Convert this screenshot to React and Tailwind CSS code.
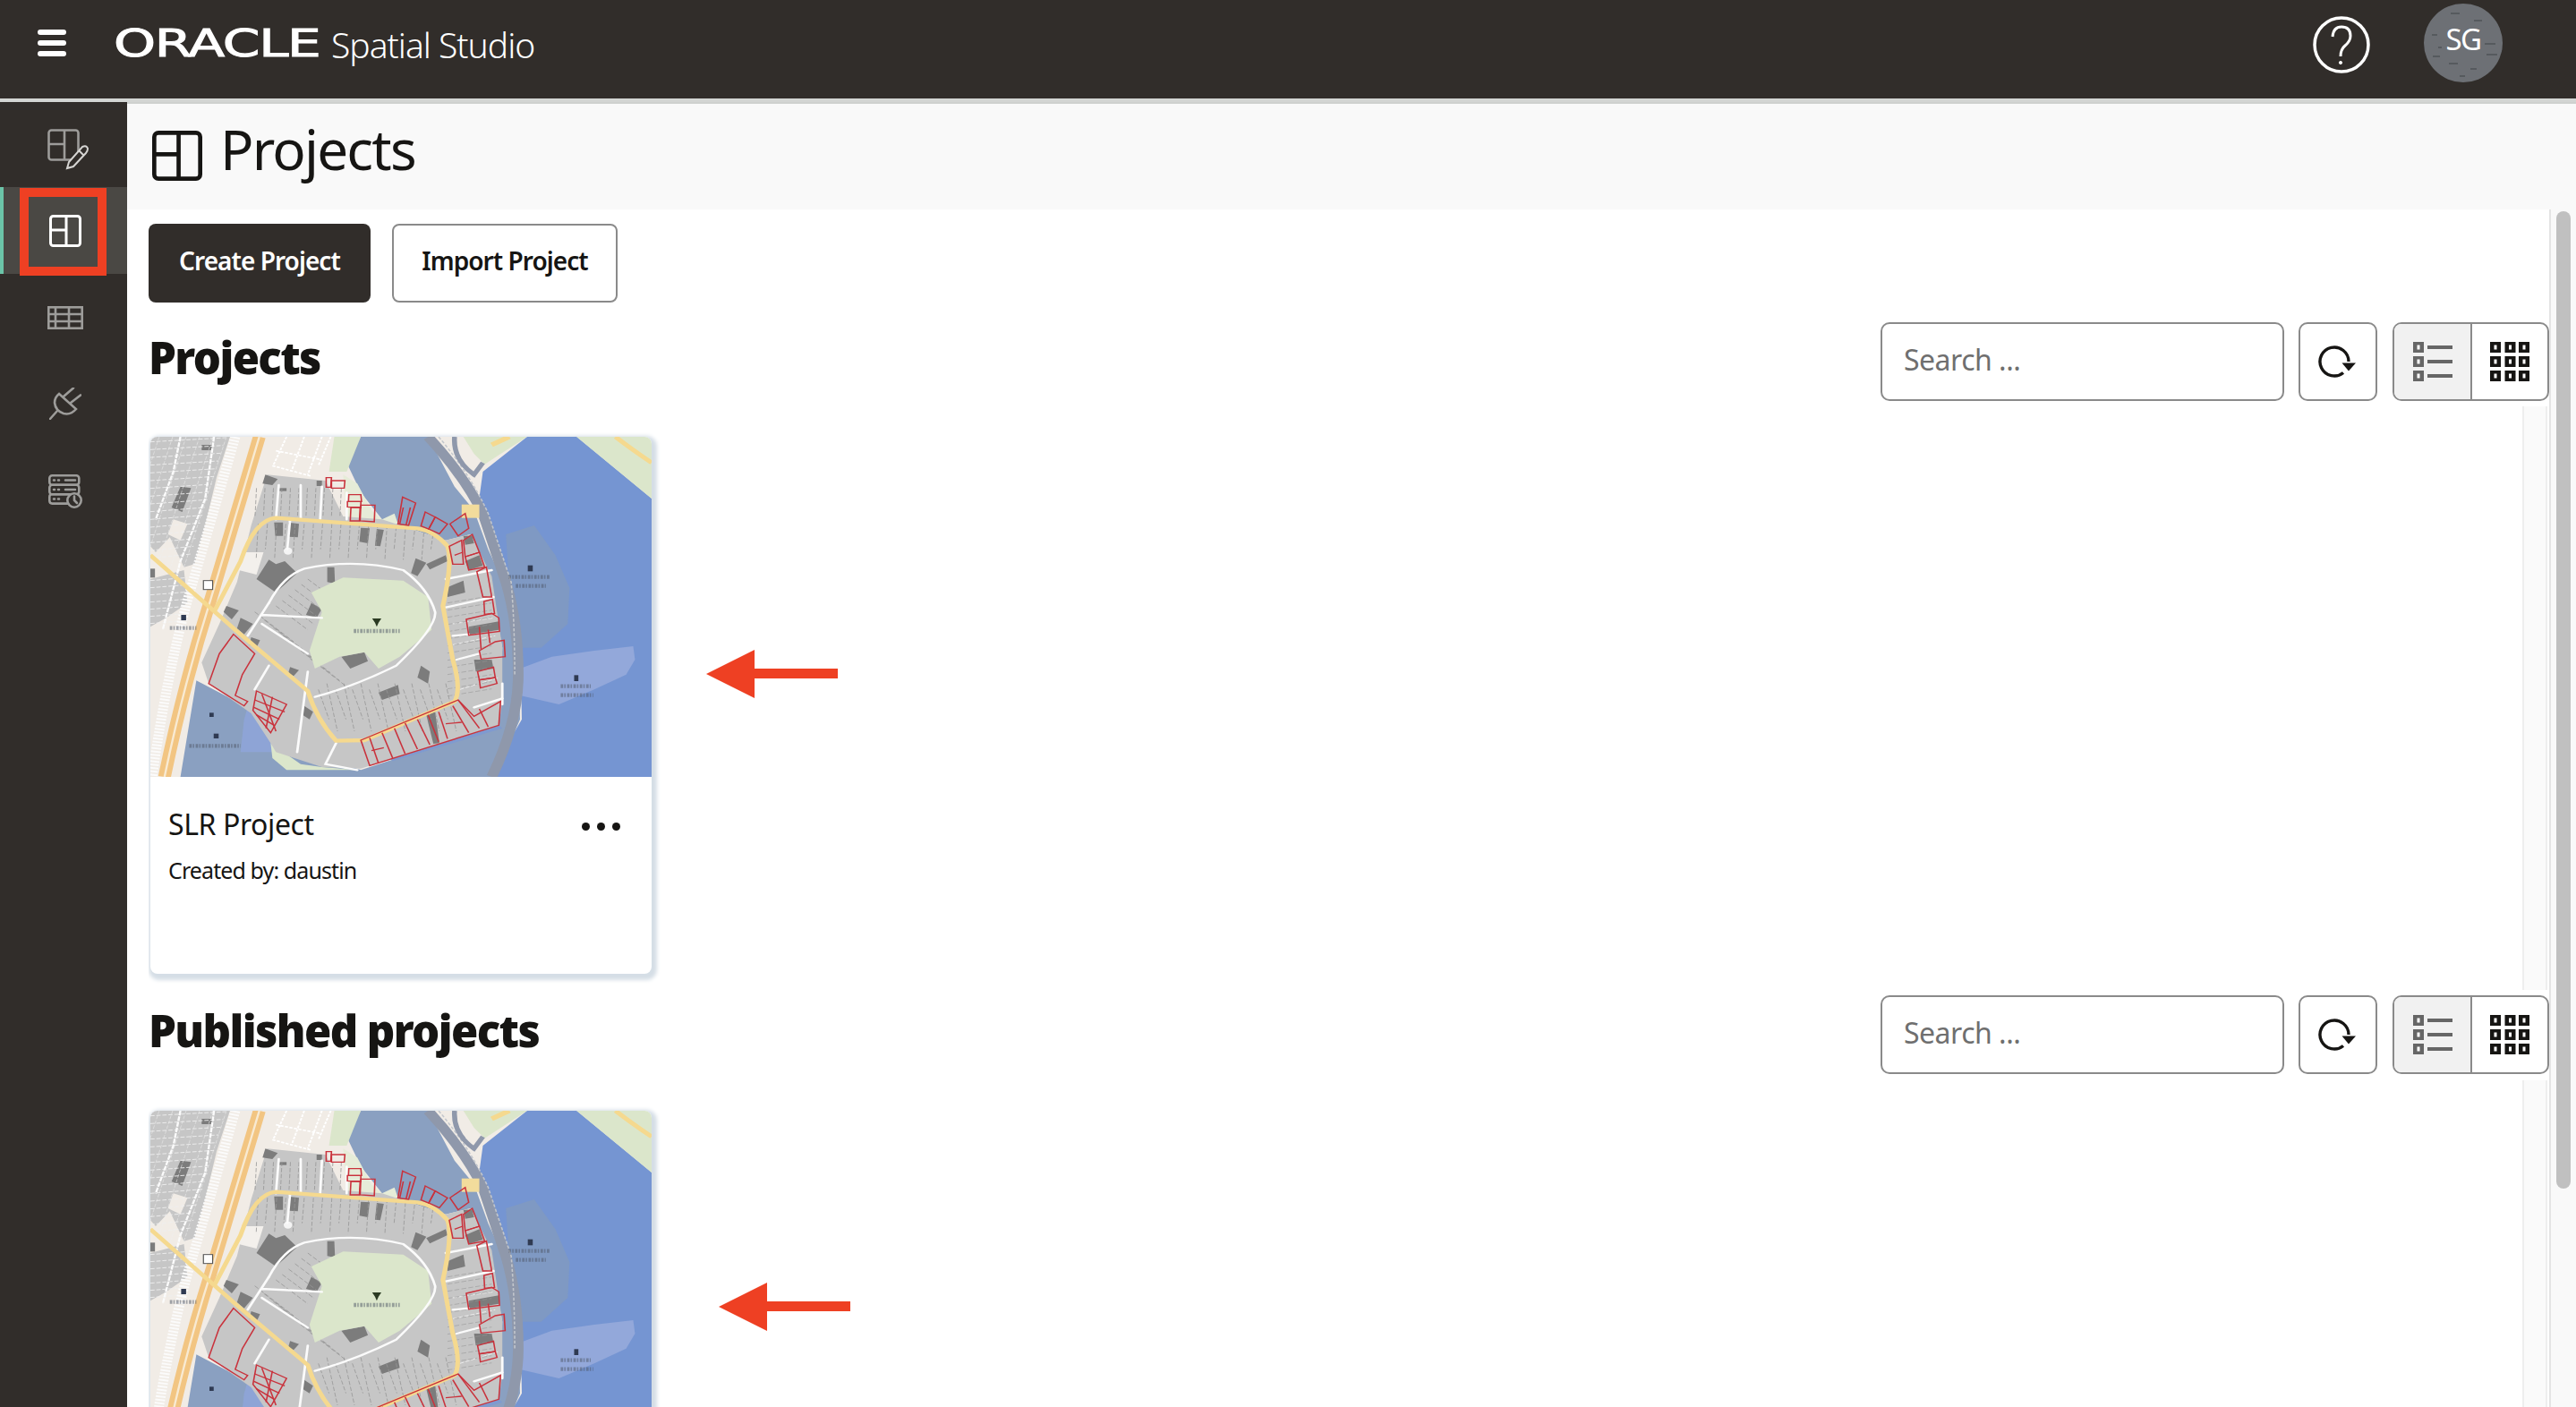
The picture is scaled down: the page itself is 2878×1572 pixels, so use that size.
import React from 'react';

const RED = '#c9323c';

// Map thumbnail, drawn in a 1417x1140 working grid and stretched to the card
const redLots = [
    '542,190 557,190 555,222 542,222',
    '557,200 595,200 593,225 557,225',
    '606,247 640,247 642,270 605,270',
    '602,270 640,270 640,290 602,288',
    '612,290 638,290 636,335 610,335',
    '640,282 680,282 678,338 638,335',
    '758,255 795,275 775,350 745,345',
    '822,305 850,322 832,362 810,352',
    '850,322 885,345 862,378 832,362',
    '935,310 945,360 915,385 892,345',
    '890,420 925,400 930,480 900,480',
    '930,400 955,380 975,440 935,455',
    '935,455 975,440 990,490 945,500',
    '968,505 995,490 1010,590 985,590',
    '988,605 1012,598 1018,645 990,648',
    '938,665 1010,645 1030,660 1032,705 945,718',
    '975,770 1020,740 1045,735 1048,790 980,798',
    '970,840 1015,825 1020,860 975,868',
    '975,868 1020,860 1025,880 978,895',
    '640,1070 915,935 960,990 1035,940 1030,1020 665,1155',
    '280,715 340,780 305,850 285,920 320,940 310,955 210,880 240,780',
    '345,905 430,950 385,1045 335,970',
];

const redLines = [
    'M665,1062 L690,1148', 'M700,1045 L730,1130', 'M735,1030 L765,1115', 'M765,1012 L800,1100',
    'M800,1000 L835,1085', 'M830,985 L860,1075', 'M860,975 L885,1065', 'M900,955 L945,1045',
    'M915,935 L975,1030', 'M975,965 L1000,1025', 'M880,1015 L925,1010', 'M670,1105 L705,1095',
    'M360,915 L400,1040', 'M390,925 L372,1030', 'M340,935 L425,975', 'M338,960 L410,1000', 'M345,985 L395,1020',
    'M760,290 L750,345', 'M780,290 L768,348', 'M905,450 L928,440', 'M975,690 L980,765', 'M1000,700 L1005,745',
];

const darkBlocks = [
    '130,220 160,225 135,305 105,290',
    '190,80 220,80 218,98 190,98',
    '370,180 405,195 390,215 362,210',
    '395,340 420,340 420,385 398,385',
    '435,340 465,345 462,390 438,388',
    '640,358 665,360 660,410 636,405',
    '685,362 705,365 695,420 680,418',
    '380,465 400,480 425,470 460,510 400,575 345,530',
    '545,490 565,490 567,545 545,540',
    '795,460 825,475 800,520 782,510',
    '825,480 880,450 885,470 835,498',
    '880,560 930,535 935,575 885,590',
    '260,620 295,635 275,665 252,640',
    '300,660 335,680 310,715 290,695',
    '330,725 355,735 345,760 325,750',
    '500,610 530,630 515,660 485,650',
    '585,790 650,775 660,805 610,830',
    '440,825 465,835 450,855 435,845',
    '690,910 745,885 750,915 700,935',
    '810,820 835,840 830,880 800,860',
    '480,955 505,975 495,1000 475,985',
    '945,690 1030,672 1030,700 945,716',
    '935,470 975,450 985,485 945,500',
    '960,800 1010,800 1015,830 965,840',
    '825,985 850,975 862,1080 845,1082',
    '45,495 58,495 58,525 45,525',
    '930,385 955,385 960,410 935,415',
    '405,225 430,225 430,235 405,235',
    '515,200 530,200 530,218 515,218',
];

const steps = (from, to, step) => Array.from({ length: Math.floor((to - from) / step) + 1 }, (_, i) => from + i * step);

// Parcel grids: pale dashes on the west side, darker ticks inside the ring road
const nwRows = steps(70, 480, 26).map(y => `M45,${y} L${Math.round(262 - (y - 53) * 0.25)},${y - 14}`).join(' ');
const nwCols = steps(70, 260, 38).map(x => `M${x},53 L${x - 120},490`).join(' ');
const swRows = steps(535, 680, 24).map(y => `M45,${y} L150,${y - 10}`).join(' ');
const ringTicks = steps(350, 860, 26).map((x, i) => `M${x},${345 + (x > 700 ? (x - 700) / 4 : 0)} L${x - 6},${i % 2 ? 430 : 465}`).join(' ');
const northTicks = steps(345, 590, 24).map(x => `M${x},225 L${x - 4},318`).join(' ');
const midTicks = steps(520, 900, 24).map((x, i) => `M${x},${i % 2 ? 880 : 900} L${x + 30},${i % 2 ? 1040 : 1000}`).join(' ');
const eastTicks = steps(610, 940, 24).map(y => `M885,${y} L1010,${y - 24}`).join(' ');
const westTicks = steps(680, 860, 26).map(x => `M${x - 340},${x - 40} L${x - 230},${x + 60}`).join(' ');
const innerTicks = steps(400, 500, 18).map(x => `M${x},${1020 - x} L${x + 90},${1100 - x}`).join(' ');

const MapLabel = ({ d }) => <path d={d} stroke="#4d5666" strokeWidth="13" strokeDasharray="7 3 4 4" opacity="0.5" fill="none" />;

const MapThumb = () => (
    <svg viewBox="45 53 1417 1140" preserveAspectRatio="none" className="block h-[380px] w-full blur-[0.6px]">
        <rect x="45" y="53" width="1417" height="1140" fill="#f1ece6" />

        {/* water */}
        <polygon points="1110,53 1250,53 1462,260 1462,1193 1000,1193 1095,1000 1090,700 1040,500 970,300 985,170" fill="#7595d2" />
        <polygon points="640,53 830,53 905,220 960,300 1000,430 1050,560 1085,760 1090,1000 1020,1193 130,1193 175,870 320,960 395,1070 640,1170 1030,1020 1040,760 1000,500 950,380 880,400 700,330 640,240 600,140" fill="#8aa0c1" />
        <polygon points="1050,380 1130,350 1190,450 1230,560 1225,680 1150,760 1090,760 1060,560" fill="#7f99c3" />
        <polygon points="1090,830 1180,790 1300,770 1410,755 1415,800 1390,850 1300,900 1200,950 1090,920" fill="#93a8da" />
        <polygon points="320,960 395,1070 400,1110 300,1110 310,1000" fill="#8ea4d6" />
        <polygon points="720,1130 1020,1010 1040,1030 730,1140" fill="#7f9ad0" />

        {/* parks and green edges */}
        <polygon points="1250,53 1462,53 1462,260" fill="#dbe6cb" />
        <polygon points="930,53 1110,53 990,145 960,110" fill="#dbe6cb" />
        <polygon points="565,53 640,53 600,170 550,170" fill="#dbe6cb" />
        <polygon points="385,1080 470,1150 530,1160 630,1170 430,1170 390,1130" fill="#dbe6cb" />
        <polygon points="590,180 630,210 670,300 700,330 735,310 745,345 600,335" fill="#e6ecd8" />
        <path d="M1360,53 Q1400,90 1462,140" stroke="#f5d98f" strokeWidth="14" fill="none" />
        <path d="M1010,80 L1060,53" stroke="#f5d98f" strokeWidth="16" fill="none" />

        {/* highway on the east shore */}
        <path d="M830,53 Q930,180 985,310 L1050,540 Q1085,680 1085,850 Q1085,1010 1010,1193" stroke="#8f98ab" strokeWidth="30" fill="none" />
        <path d="M860,53 Q950,180 1000,310 L1065,540 Q1075,680 1075,850" stroke="#c2c6cc" strokeWidth="4" strokeDasharray="10 6" fill="none" />
        <path d="M905,53 Q900,130 960,180 L985,140" stroke="#8f98ab" strokeWidth="14" fill="none" />
        <rect x="925" y="280" width="50" height="45" fill="#f2dc9c" />

        {/* dashed streets in the pale block north of the ring */}
        <path d="M390,150 L500,185 M400,100 L530,130 M430,53 L392,150 M480,53 L445,165 M530,53 L490,180 M555,53 L520,150" stroke="#ffffff" strokeWidth="5" strokeDasharray="9 4" fill="none" />

        {/* neighbourhood blocks */}
        <polygon points="45,53 270,53 232,190 200,350 170,480 140,490 100,390 60,440 45,420" fill="#c6c6c6" />
        <polygon points="45,530 140,500 150,610 90,660 45,690" fill="#c6c6c6" />
        <polygon points="375,180 540,200 590,320 700,330 880,400 950,380 1010,520 1040,760 1040,940 1030,1020 640,1165 530,1160 400,1110 385,1080 330,980 210,880 190,810 240,680 290,540 330,350" fill="#c6c6c6" />
        <polygon points="110,330 150,345 130,400 95,380" fill="#f1ece6" />
        <polygon points="300,440 365,440 345,515 295,500" fill="#f3f0ec" />
        {darkBlocks.map((points, i) => <polygon key={i} points={points} fill="#7c7c7c" />)}

        {/* lot lines */}
        <g stroke="#efefef" strokeWidth="2.5" strokeDasharray="12 5" fill="none">
            <path d={nwRows} />
            <path d={swRows} />
            <path d={nwCols} opacity="0.6" />
            <path d="M900,620 L1010,590 M900,680 L1015,660 M900,750 L1020,720 M920,900 L1030,860" />
        </g>
        <g stroke="#969696" strokeWidth="2.2" strokeDasharray="14 6" fill="none">
            <path d={ringTicks} />
            <path d={northTicks} />
            <path d={midTicks} />
            <path d={eastTicks} opacity="0.7" />
            <path d={westTicks} />
            <path d={innerTicks} />
        </g>

        {/* central park, on top of the parcel ticks */}
        <polygon points="500,575 590,525 760,535 830,590 840,700 750,790 690,830 650,775 580,790 510,830 495,770 530,640" fill="#dbe6cb" />
        <circle cx="434" cy="436" r="12" fill="#f4f4f4" />

        {/* light streets */}
        <g stroke="#fbfbfb" strokeWidth="7" fill="none" strokeLinecap="round">
            <path d="M380,610 Q420,520 480,495 Q620,460 760,500 Q830,560 850,640 Q855,690 740,820 Q620,890 510,925" />
            <path d="M380,610 L320,720 M360,650 L530,660 M360,680 L490,780 M440,330 L432,430 M408,215 L400,330 M470,215 L470,330 M530,220 L525,330 M600,240 L600,330" />
            <path d="M880,530 L1010,500 M880,625 L1015,590 M900,720 L945,715 M910,800 L975,780 M960,960 L1040,930" />
            <path d="M490,840 L460,1110 M380,820 L340,900 M570,1080 L540,1150 L630,1170" />
            <path d="M1040,880 L1040,950" />
        </g>
        <path d="M225,53 L200,260 L130,470 L80,700 M130,53 L110,170 L60,330" stroke="#fbfbfb" strokeWidth="6" strokeDasharray="16 3" fill="none" />

        {/* interstate */}
        <path d="M285,53 Q230,280 150,600 Q90,860 50,1193" stroke="#fbfbfb" strokeWidth="28" strokeDasharray="6 5" fill="none" />
        <path d="M353,53 Q300,260 215,600 Q140,880 85,1193" stroke="#f2c582" strokeWidth="36" fill="none" />
        <path d="M353,53 Q300,260 215,600 Q140,880 85,1193" stroke="#f8ead2" strokeWidth="6" fill="none" />

        {/* ring road */}
        <path d="M45,450 L285,700 L490,905 Q515,1000 570,1072 L650,1070 L905,940 Q925,900 900,800 L872,620 Q900,470 885,420 Q850,370 800,360 L400,325 Q340,330 300,470 L225,640" stroke="#f5d98f" strokeWidth="13" fill="none" />

        {/* highlighted parcels */}
        <g stroke={RED} strokeWidth="4" fill="none">
            {redLots.map((points, i) => <polygon key={i} points={points} />)}
            {redLines.map((d, i) => <path key={i} d={d} />)}
        </g>

        {/* map labels, too small to read */}
        <MapLabel d="M620,704 H750" />
        <MapLabel d="M100,694 H175" />
        <MapLabel d="M1058,523 H1173" />
        <MapLabel d="M1078,553 H1163" />
        <MapLabel d="M1205,889 H1290" />
        <MapLabel d="M1205,919 H1297" />
        <MapLabel d="M155,1089 H300" />
        <g fill="#2f3a52">
            <polygon points="672,662 698,662 690,676 685,690 680,676" fill="#2b3a22" />
            <rect x="132" y="650" width="14" height="18" />
            <rect x="1112" y="484" width="14" height="20" />
            <rect x="1243" y="852" width="12" height="20" />
            <rect x="212" y="978" width="12" height="14" />
            <rect x="224" y="1048" width="14" height="16" />
        </g>
        <rect x="195" y="535" width="26" height="30" fill="#ffffff" stroke="#555555" strokeWidth="3" />
    </svg>
);

// Layout glyph used by the page title and the side navigation
const LayoutIcon = ({ className, stroke, width = 3 }) => (
    <svg viewBox="0 0 36 36" className={className} fill="none" stroke={stroke} strokeWidth={width}>
        <rect x="1.5" y="1.5" width="33" height="33" rx="3" />
        <path d="M19 1.5 V34.5 M1.5 17 H19" />
    </svg>
);

const EditProjectIcon = () => (
    <svg viewBox="0 0 46 46" className="h-[46px] w-[46px]" fill="none" strokeWidth="2.6">
        <rect x="1.5" y="1.5" width="33" height="33" rx="3" stroke="#9d9c9a" />
        <path d="M19 1.5 V34.5 M1.5 17 H19" stroke="#9d9c9a" />
        <path d="M39 20 Q44 18 45 22 Q45 25 43 27 L29 42 L22 44 L24 37 Z M35 24 L41 30" stroke="#d6d5d3" fill="#312d2a" strokeWidth="2" />
    </svg>
);

const TableIcon = () => (
    <svg viewBox="0 0 40 26" className="h-[26px] w-[40px]" fill="none" stroke="#9d9c9a" strokeWidth="2.6">
        <rect x="1.3" y="1.3" width="37.4" height="23.4" />
        <path d="M1.3 9 H38.7 M1.3 17 H38.7 M9 1.3 V24.7 M24 1.3 V24.7" />
    </svg>
);

const PlugIcon = () => (
    <svg viewBox="0 0 36 36" className="h-[36px] w-[36px]" fill="none" stroke="#9d9c9a" strokeWidth="2.6" strokeLinecap="round">
        <path d="M11 7 L30 24 Q24 31 16 29 Q7 26 6 17 Q6 11 11 7 Z" fill="#312d2a" />
        <path d="M16 10 L27 0.5 M24 17 L35 8.5 M9 26 L1 35" />
    </svg>
);

const ScheduleIcon = () => (
    <svg viewBox="0 0 38 38" className="h-[38px] w-[38px]" fill="none" stroke="#9d9c9a" strokeWidth="2.6" strokeLinecap="round">
        <rect x="1.3" y="1.3" width="33" height="10.5" rx="3" />
        <rect x="1.3" y="11.8" width="33" height="10.5" rx="3" />
        <path d="M23 32.6 H4.3 Q1.3 32.6 1.3 29.6 V25 Q1.3 22.3 4.3 22.3 H22" />
        <path d="M6 6.5 H7 M11 6.5 H12 M19 6.5 H30 M6 17 H7 M11 17 H12 M19 17 H30 M6 27.5 H7 M11 27.5 H12" />
        <circle cx="29" cy="29" r="7.7" fill="#312d2a" />
        <path d="M29 24.5 V29 L32 32" />
    </svg>
);

const SideItem = ({ active, children, height = 'h-[97px]' }) => (
    <div className={`flex items-center justify-center border-l-4 ${height} ${active ? 'border-[#6bc4a8] bg-[#4a4844]' : 'border-transparent'}`}>
        {children}
    </div>
);

const Sidebar = () => (
    <aside className="flex w-[142px] shrink-0 flex-col bg-[#312d2a]">
        <SideItem height="h-[95px]">
            <div className="ml-[6px] mt-[10px]"><EditProjectIcon /></div>
        </SideItem>
        <SideItem active><LayoutIcon className="h-[36px] w-[36px]" stroke="#ffffff" /></SideItem>
        <SideItem><TableIcon /></SideItem>
        <SideItem><div className="mb-[2px]"><PlugIcon /></div></SideItem>
        <SideItem><ScheduleIcon /></SideItem>
    </aside>
);

const Header = () => (
    <header className="flex h-[114px] shrink-0 items-start border-b-4 border-[#d3d5d3] bg-[#312d2a] text-white">
        <div className="ml-[42px] mt-[33px] flex w-[32px] flex-col gap-[6px]">
            <div className="h-[6px] rounded-full bg-white"></div>
            <div className="h-[6px] rounded-full bg-white"></div>
            <div className="h-[6px] rounded-full bg-white"></div>
        </div>
        <span className="ml-[53px] mt-[24px] w-[243px] origin-left scale-x-[1.39] font-['DejaVu_Sans',sans-serif] text-[43px] leading-[48px] tracking-[-1px] [-webkit-text-stroke:1px_#ffffff]">ORACLE</span>
        <span className="mt-[24px] font-['Noto_Sans',sans-serif] text-[39px] leading-[52px] font-light tracking-[-1px]">Spatial Studio</span>
        <svg viewBox="0 0 64 64" className="ml-auto mt-[18px] h-[64px] w-[64px]" fill="none" stroke="#ffffff">
            <circle cx="32" cy="32" r="30" strokeWidth="3.5" />
            <path d="M22 23 Q23 12 32 12 Q42 12 42 22 Q42 28 36 33 Q31 37 31 45" strokeWidth="3" />
            <circle cx="31" cy="52" r="1.6" fill="#ffffff" strokeWidth="1" />
        </svg>
        <div className="relative ml-[60px] mr-[82px] mt-[4px] flex h-[88px] w-[88px] justify-center overflow-hidden rounded-full bg-[#6d7075]">
            <svg viewBox="0 0 88 88" className="absolute inset-0 h-full w-full" fill="#565a5e">
                <rect x="30" y="10" width="10" height="2" /><rect x="56" y="18" width="9" height="2" />
                <rect x="9" y="34" width="6" height="2" /><rect x="68" y="44" width="12" height="2" />
                <rect x="10" y="58" width="8" height="2" /><rect x="70" y="56" width="12" height="2" />
                <rect x="28" y="66" width="10" height="2" /><rect x="52" y="72" width="7" height="2" />
                <rect x="40" y="80" width="6" height="2" /><rect x="16" y="48" width="4" height="2" />
            </svg>
            <span className="relative mt-[20px] font-['Noto_Sans',sans-serif] text-[33px] leading-[40px] tracking-[-1.5px]">SG</span>
        </div>
    </header>
);

const RefreshIcon = () => (
    <svg viewBox="0 0 60 60" className="mr-[4px] mt-[2px] h-[60px] w-[60px]" fill="none" stroke="#161513" strokeWidth="3.4">
        <path d="M38 41.5 A16 16 0 1 1 44 29" />
        <polygon points="36.5,30.5 52,30.5 44,39.5" fill="#161513" stroke="none" />
    </svg>
);

const ListIcon = () => (
    <svg viewBox="0 0 44 44" className="h-[44px] w-[44px]">
        {[0, 16, 32].map(y => (
            <g key={y}>
                <rect x="0" y={y} width="12" height="12" fill="#666666" />
                <rect x="4.5" y={y + 3.5} width="3" height="5" fill="#ffffff" />
                <rect x="16" y={y + 4} width="28" height="4" fill="#666666" />
            </g>
        ))}
    </svg>
);

const GridIcon = () => (
    <svg viewBox="0 0 44 44" className="h-[44px] w-[44px]">
        {[0, 16, 32].map(y => [0, 16.5, 32].map(x => (
            <g key={`${x}-${y}`}>
                <rect x={x} y={y} width="12" height="12" fill="#161513" />
                <rect x={x + 4.5} y={y + 3.5} width="3" height="5" fill="#ffffff" />
            </g>
        )))}
    </svg>
);

const SectionHeader = ({ title, className }) => (
    <div className={`flex items-start justify-between bg-white ${className}`}>
        <h2 className="pt-[7px] text-[49px] leading-[64px] font-black tracking-[-1.6px] text-[#161513]">{title}</h2>
        <div className="flex items-center">
            <div className="flex h-[88px] w-[451px] items-center rounded-[10px] border-2 border-[#8a8a8a] pb-[5px] pl-[24px] text-[32px] tracking-[-0.5px] text-[#6f6f6f]">Search ...</div>
            <div className="ml-[16px] flex h-[88px] w-[88px] items-center justify-center rounded-[10px] border-2 border-[#8a8a8a]"><RefreshIcon /></div>
            <div className="ml-[17px] flex h-[88px] w-[175px] overflow-hidden rounded-[10px] border-2 border-[#8a8a8a]">
                <div className="flex w-[87px] items-center justify-center border-r-2 border-[#8a8a8a] bg-[#f1f1f1]"><ListIcon /></div>
                <div className="flex flex-1 items-center justify-center"><GridIcon /></div>
            </div>
        </div>
    </div>
);

// The second card runs past the bottom of the window, so only its map is in view
const ProjectCard = ({ details }) => (
    <div className="h-[600px] w-[560px] overflow-hidden rounded-[8px] bg-white shadow-[2px_3px_4px_4px_#d5dee6]">
        <MapThumb />
        {details && (
            <div className="relative px-[20px] pt-[31px]">
                <div className="text-[32px] leading-[44px] tracking-[-0.4px] text-[#161513]">SLR Project</div>
                <div className="mt-[12px] text-[25px] leading-[34px] tracking-[-0.9px] text-[#161513]">Created by: daustin</div>
                <div className="absolute right-[35px] top-[51px] flex gap-[8px]">
                    <div className="h-[9px] w-[9px] rounded-full bg-[#161513]"></div>
                    <div className="h-[9px] w-[9px] rounded-full bg-[#161513]"></div>
                    <div className="h-[9px] w-[9px] rounded-full bg-[#161513]"></div>
                </div>
            </div>
        )}
    </div>
);

const CardRow = ({ className, details }) => (
    <div className={`flex justify-between overflow-hidden pl-[2px] pt-[34px] ${className}`}>
        <div className="-mb-[300px]"><ProjectCard details={details} /></div>
        <div className="-mt-[34px] mr-[2px] w-[28px] border-x-2 border-[#eeeeee] bg-[#fafafa]"></div>
    </div>
);

const Arrow = ({ className }) => (
    <svg viewBox="0 0 147 54" className={`absolute h-[54px] w-[147px] ${className}`} fill="#ee4023">
        <polygon points="0,27 54,0 54,21 147,21 147,32 54,32 54,54" />
    </svg>
);

const App = () => (
    <div className="relative flex h-[1572px] w-[2878px] flex-col overflow-hidden bg-white font-['Noto_Sans',sans-serif]">
        <Header />
        <div className="flex min-h-0 flex-1">
            <Sidebar />
            <main className="flex min-w-0 flex-1 flex-col">
                <div className="flex h-[120px] shrink-0 items-start border-t-2 border-[#cfd1cf] bg-[#f9f9f9] pl-[28px]">
                    <LayoutIcon className="mt-[30px] h-[56px] w-[56px]" stroke="#161513" width={3} />
                    <h1 className="ml-[20px] mt-[10px] text-[62px] leading-[80px] tracking-[-1.8px] text-[#161513]">Projects</h1>
                </div>
                <div className="flex min-h-0 flex-1">
                    <div className="min-w-0 flex-1 pl-[24px] pt-[16px]">
                        <div className="flex gap-[24px]">
                            <button className="h-[88px] w-[248px] rounded-[8px] bg-[#312d2a] pb-[6px] text-[28px] font-semibold tracking-[-0.95px] text-white">Create Project</button>
                            <button className="h-[88px] w-[252px] rounded-[8px] border-2 border-[#8a8a8a] pb-[6px] text-[28px] font-semibold tracking-[-0.95px] text-[#161513]">Import Project</button>
                        </div>
                        <SectionHeader title="Projects" className="mt-[22px] pb-[6px]" />
                        <CardRow className="h-[652px]" details />
                        <SectionHeader title="Published projects" className="pb-[7px] pt-[6px]" />
                        <CardRow className="h-[366px]" />
                    </div>
                    {/* page scrollbar */}
                    <div className="w-[30px] shrink-0 border-l-2 border-[#e4e4e4] bg-[#f9f9f9] pl-[6px] pr-[6px] pt-[2px]">
                        <div className="h-[1092px] rounded-full bg-[#c0c0c0]"></div>
                    </div>
                </div>
            </main>
        </div>

        {/* tutorial annotations */}
        <div className="absolute left-[22px] top-[210px] h-[98px] w-[97px] border-[10px] border-[#ee4023]"></div>
        <Arrow className="left-[789px] top-[726px]" />
        <Arrow className="left-[803px] top-[1433px]" />
    </div>
);

export default App;
